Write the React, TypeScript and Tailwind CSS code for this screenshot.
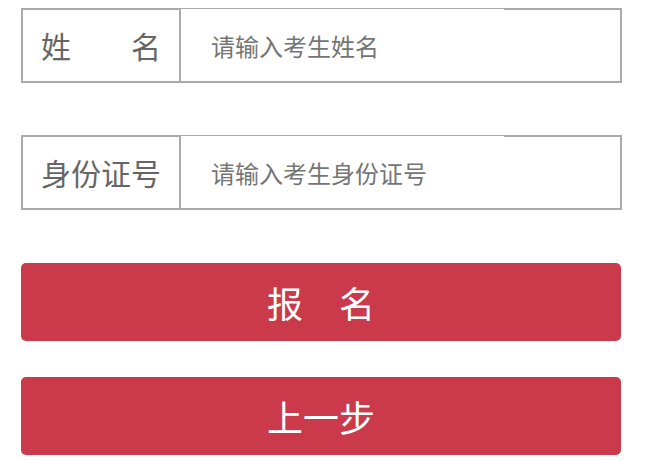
import React, { useState } from 'react';

const font = { fontFamily: '"Noto Sans CJK SC", "Noto Sans", sans-serif' };

interface FieldProps {
  label: string;
  placeholder: string;
  value: string;
  onChange: (v: string) => void;
}

const Field: React.FC<FieldProps> = ({ label, placeholder, value, onChange }) => (
  <div className="flex h-[75px] w-[601px] border-2 border-[#aaaaaa] bg-white">
    <div className="flex w-[158px] shrink-0 items-center justify-center border-r-2 border-[#aaaaaa] text-[30px] text-[#666666]">
      {label}
    </div>
    <input
      value={value}
      onChange={(e) => onChange(e.target.value)}
      placeholder={placeholder}
      className="-mt-px h-[72px] w-[323px] bg-white pl-[30px] text-[24px] text-[#333333] outline-none placeholder:text-[#757575]"
      style={font}
    />
  </div>
);

export default function App() {
  const [name, setName] = useState('');
  const [idNo, setIdNo] = useState('');

  return (
    <div className="flex flex-col bg-white pl-[21px] pt-[8px]" style={font}>
      <Field label="姓　　名" placeholder="请输入考生姓名" value={name} onChange={setName} />
      <div className="mt-[52px]">
        <Field label="身份证号" placeholder="请输入考生身份证号" value={idNo} onChange={setIdNo} />
      </div>
      <button className="mt-[53px] flex h-[78px] w-[600px] items-center justify-center rounded-[5px] bg-[#cb3a4a] text-[36px] text-white">
        报　名
      </button>
      <button className="mt-[36px] flex h-[78px] w-[600px] items-center justify-center rounded-[5px] bg-[#cb3a4a] text-[36px] text-white">
        上一步
      </button>
    </div>
  );
}
